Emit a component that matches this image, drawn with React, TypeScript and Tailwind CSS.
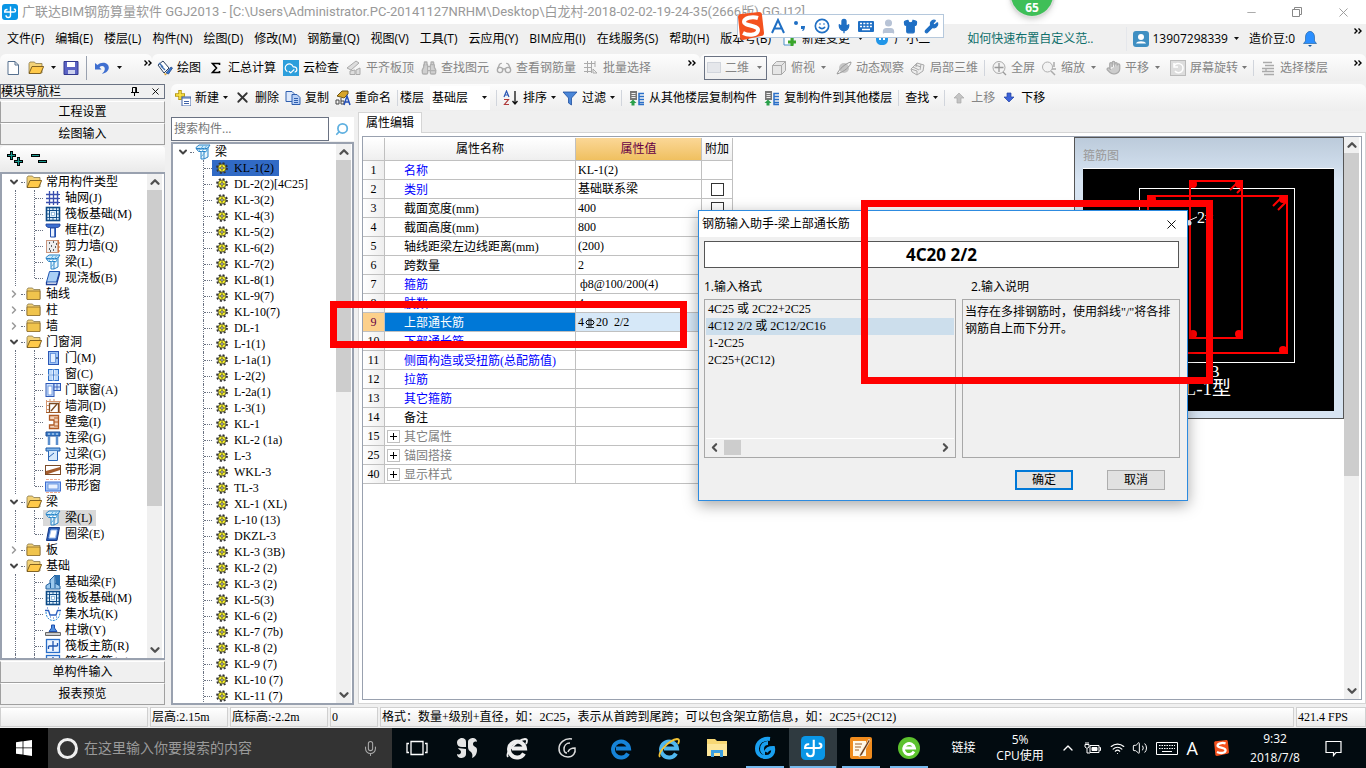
import type { ReactNode } from 'react'
import {
  Binoculars,
  ChevronDown,
  ChevronLeft,
  ChevronRight,
  ChevronUp,
  CloudCheck,
  Glasses,
  Hand,
  Mic,
  Minus,
  Search,
  Shirt,
  Smile,
  User,
  Volume2,
  Wifi,
  Wrench,
  X,
} from 'lucide-react'
import clsx from 'clsx'

const UI = "font-['Open_Sans','Noto_Sans_CJK_SC',sans-serif]"
const SONG = "font-['Liberation_Serif','Noto_Sans_CJK_SC',serif]"

/* ---------- small shared drawings ---------- */

function Svg({ children, size = 16, className }: { children: ReactNode; size?: number; className?: string }) {
  return (
    <svg viewBox="0 0 16 16" width={size} height={size} className={clsx('shrink-0', className)} fill="none">
      {children}
    </svg>
  )
}

function Caret({ light }: { light?: boolean }) {
  return (
    <svg viewBox="0 0 5 3" width="5" height="3" className="shrink-0">
      <path d="M0 0h5L2.500 3z" fill={light ? '#777' : '#111'} />
    </svg>
  )
}

function More() {
  return (
    <button aria-label="更多" className="shrink-0 self-start pt-1">
      <svg viewBox="0 0 8 6" width="8" height="6" fill="none" stroke="#000" strokeWidth="1.4">
        <path d="M.5.5 3 3 .5 5.5M4.5.5 7 3 4.5 5.5" />
      </svg>
    </button>
  )
}

function Divider() {
  return <span className="h-4 w-px shrink-0 bg-gray-300" />
}

function AppLogo({ size = 16 }: { size?: number }) {
  return (
    <Svg size={size}>
      <rect width="16" height="16" rx="3" fill="#0a96e6" />
      <path d="M8.500 2.500v8.700c0 1.500-.9 2.300-2.200 2.300S4 12.600 4 11.200" stroke="#fff" strokeWidth="1.400" />
      <path d="M5.500 5.500H4.800C3.500 5.500 2.700 6.600 2.700 8h9.300c1 0 1.600-.6 1.600-1.600S12.800 5 11.800 5" stroke="#fff" strokeWidth="1.400" />
    </Svg>
  )
}

/* ---------- component type icons ---------- */

function FolderIcon({ open }: { open?: boolean }) {
  return (
    <Svg>
      <path d="M1 3.500 2 2h4.500l1.200 1.500H14V13H1z" fill="#f3d277" stroke="#8a7a4c" strokeWidth=".8" />
      {open ? (
        <path d="M4 6.500h11.700L12.500 13.500H1z" fill="#ffc94a" stroke="#75571a" strokeWidth=".9" />
      ) : (
        <path d="M1 5h13v8.500H1z" fill="#f0c44d" stroke="#8a6a28" strokeWidth=".8" />
      )}
    </Svg>
  )
}

function GearIcon() {
  return (
    <svg viewBox="0 0 12 12" width="12" height="12" className="shrink-0" fill="none">
      <circle cx="6" cy="6" r="5" stroke="#333" strokeWidth="1.800" strokeDasharray="2 1.930" />
      <circle cx="6" cy="6" r="4" fill="#f6f022" stroke="#333" strokeWidth=".7" />
      <path d="M6 2.500v1.500M6 8v1.500M2.500 6H4M8 6h1.500" stroke="#555" strokeWidth=".8" />
      <circle cx="6" cy="6" r="1.300" fill="#fff" stroke="#222" strokeWidth=".8" />
    </svg>
  )
}

function BeamIcon() {
  return (
    <Svg>
      <path d="M1 3.500 4 1h11l-2.500 3.500H1z" fill="#cfeafa" stroke="#2b83c6" />
      <path d="M1.500 5h11l-1 2.500H3.500z" fill="#fff" stroke="#2b83c6" />
      <path d="M6 8v7h3V8M9 15l4-2V3" fill="#e4f3fc" stroke="#2b83c6" />
      <path d="M6 13l7-8M3.500 7.500 8 2M6.500 8l5-6" stroke="#5aaee2" />
    </Svg>
  )
}

function TypeIcon({ kind }: { kind: string }) {
  switch (kind) {
    case 'axis':
      return (
        <Svg>
          <path d="M4.500 1v14M8.500 1v14M12.500 1v14M1 4.500h13M1 8.500h13M1 12.500h13" stroke="#3a4fae" strokeWidth="1.300" />
          <path d="M14 4.500h2M14 8.500h2M14 12.500h2" stroke="#3a4fae" strokeDasharray="1 1" />
        </Svg>
      )
    case 'raft':
      return (
        <Svg>
          <rect x="1.500" y="1.500" width="13" height="13" fill="#dff0fb" stroke="#0d4a86" strokeWidth="1.600" />
          <rect x="4.500" y="4.500" width="7" height="7" stroke="#0d4a86" />
          <path d="M4.500 2v2.500M8 2v2.500M11.500 2v2.500M4.500 12v2M8 12v2M11.500 12v2M2 4.500h2M2 8h2M2 11.500h2M12 4.500h2M12 8h2M12 11.500h2" stroke="#0d4a86" strokeWidth=".8" />
          <rect x="6.500" y="6.500" width="3" height="3" fill="#fff" stroke="#7aa9d0" strokeWidth=".7" />
        </Svg>
      )
    case 'column':
      return (
        <Svg>
          <path d="M1 2h14v2l-2 1.500H3L1 4z" fill="#3b6fd0" stroke="#1c3f97" strokeWidth=".8" />
          <path d="M5.500 6h5v9h-5z" fill="#e8f1ff" stroke="#1f4fae" />
          <path d="M10 6v9" stroke="#1f4fae" strokeWidth="1.500" />
        </Svg>
      )
    case 'wall':
      return (
        <Svg>
          <rect x="1.500" y="2.500" width="12" height="12" fill="#eee" stroke="#c9957c" />
          <path d="M4 5h1M8 4h1M6 8h1M10 9h1M4 11h1M8 12h1M11 6h1M5 13h1" stroke="#333" strokeWidth="1.300" />
          <path d="M13 2v12M13 5h2M13 9h2M13 13h2" stroke="#c96a2f" />
        </Svg>
      )
    case 'beam':
      return <BeamIcon />
    case 'slab':
      return (
        <Svg>
          <path d="M4.500 1.500h10L11.500 12H1.500z" fill="#a9cff5" stroke="#1f55b0" />
          <path d="M1.500 12v2.500h10L14.500 4V1.500" stroke="#1f3f97" strokeWidth="1.300" />
        </Svg>
      )
    case 'door':
      return (
        <Svg>
          <rect x="3.500" y="1.500" width="10" height="13" fill="#9cc3f5" stroke="#2c57b5" />
          <rect x="5.500" y="3.500" width="5" height="9" fill="#e3efff" stroke="#5b8bdc" strokeWidth=".8" />
          <path d="M11 8h2" stroke="#123" />
        </Svg>
      )
    case 'window':
      return (
        <Svg>
          <rect x="3.500" y="3.500" width="10" height="11" fill="#bcd9fb" stroke="#2c6fc9" />
          <path d="M8.500 3.500v11M3.500 9h10" stroke="#fff" strokeWidth="2" />
          <path d="M8.500 3.500v11M3.500 9h10" stroke="#2c6fc9" strokeWidth=".8" />
        </Svg>
      )
    case 'doorwin':
      return (
        <Svg>
          <rect x="1" y="1.500" width="8" height="13" fill="#cfe2fb" stroke="#2c57b5" />
          <rect x="3" y="4" width="4" height="9" fill="#fff" stroke="#5b8bdc" strokeWidth=".8" />
          <rect x="9" y="1.500" width="6.500" height="7" fill="#cfe2fb" stroke="#2c57b5" />
          <path d="M12 2v6M9 5h6" stroke="#2c57b5" strokeWidth=".8" />
        </Svg>
      )
    case 'hole':
      return (
        <Svg>
          <path d="M1.500 2v13M1 3.500h15M1 7.500h3M1 11.500h3M5 1v3M9 1v3M14.500 3v12" stroke="#d59770" />
          <path d="M4.500 14V5.500h9V14" fill="#fff" stroke="#7c4a22" strokeWidth="1.300" />
          <path d="m6 13 6-7" stroke="#7c4a22" strokeWidth="1.300" />
          <path d="M1 14.500h15" stroke="#a15a28" />
        </Svg>
      )
    case 'niche':
      return (
        <Svg>
          <path d="M4.500 1.500h9v13h-9V11H9V6H4.500z" fill="#f3d4bd" stroke="#b05a24" strokeWidth="1.300" />
          <path d="M9 4h4M9 8h4M9 12h4" stroke="#b05a24" />
        </Svg>
      )
    case 'link':
      return (
        <Svg>
          <path d="M1 2h14v4H1z" fill="#3c7fcb" stroke="#1c4d94" />
          <path d="M3 4h2M7 4h2M11 4h2" stroke="#d9ecff" />
          <path d="M4 6v9M12 6v9" stroke="#5b8fce" strokeWidth="2.500" />
        </Svg>
      )
    case 'lintel':
      return (
        <Svg>
          <path d="M1 2h14v3H1z" fill="#7fb4ea" stroke="#1c5aa6" />
          <path d="M3.500 5v9.500h9V5M4 11l5-4" fill="#d6e9fb" stroke="#2a66b6" />
        </Svg>
      )
    case 'striphole':
      return (
        <Svg>
          <rect x=".5" y="3.500" width="15" height="9" fill="#fff" stroke="#7a4a27" />
          <path d="M1 12V9l14-4v3L3 12z" fill="#a45c2c" />
        </Svg>
      )
    case 'stripwin':
      return (
        <Svg>
          <path d="M1 1.500h14M1 14.500h14" stroke="#eea98d" strokeDasharray="3 1" />
          <rect x=".5" y="4" width="15" height="9" fill="#a7c8f7" stroke="#3a6bd0" />
          <rect x="3" y="6" width="10" height="5" fill="#e9f2ff" stroke="#5b8bdc" strokeWidth=".8" />
        </Svg>
      )
    case 'ring':
      return (
        <Svg>
          <path d="M4 1.500h10.500L12 14.500H1.500z" fill="#2c5fb8" stroke="#173a86" />
          <path d="M6 4h6l-1.500 8H4z" fill="#fff" stroke="#9fc0ef" />
        </Svg>
      )
    case 'fbeam':
      return (
        <Svg>
          <path d="M10 1h5v10l-4 3z" fill="#2a6fb0" />
          <path d="M1 15v-3.500L5 9V6l5-5v8l5 3v3z" fill="#9cc9ee" stroke="#1f5f9e" />
          <path d="M5.500 14V9M10 9v5" stroke="#1f5f9e" />
        </Svg>
      )
    case 'pit':
      return (
        <Svg>
          <path d="M0 4.500h3.500L5 9h6l1.500-4.500H16" stroke="#2a5fc0" strokeWidth="1.300" />
          <path d="M1 6c0 5 3 8.500 7 8.500S15 11 15 6" stroke="#2a8fd8" strokeDasharray="2 1" />
          <path d="M5 11h1M8 12h1M11 11h1M2 2h1M13 2h1" stroke="#2a5fc0" />
        </Svg>
      )
    case 'pier':
      return (
        <Svg>
          <path d="M6.500 3h3v3l2.500 3.500H4L6.500 6z" fill="#4f8fe0" stroke="#1f4fae" />
          <path d="M.5 10.500h15v3H.5z" fill="#ccc" stroke="#666" />
        </Svg>
      )
    default:
      return (
        <Svg>
          <rect x="1.500" y="1.500" width="13" height="13" fill="#eef6ff" stroke="#2a6fc9" strokeWidth="1.300" />
          <path d="M8 3v10M3.500 8h9M3.500 8v3M12.500 8V5" stroke="#1f55b0" strokeWidth="1.300" />
        </Svg>
      )
  }
}

/* ---------- title and menu ---------- */

function TitleBar() {
  return (
    <header className="flex h-6 shrink-0 items-center bg-white pl-[2px] text-[#999]">
      <AppLogo />
      <h1 className="ml-1 flex-1 whitespace-nowrap font-['Roboto','Noto_Sans_CJK_SC',sans-serif] text-[13px] leading-6">
        广联达BIM钢筋算量软件{' GGJ2013 - [C:\\Users\\Administrator.PC-20141127NRHM\\Desktop\\'}
        白龙村-2018-02-02-19-24-35(2666版).GGJ12]
      </h1>
      <button aria-label="最小化" className="flex w-[46px] justify-center">
        <Minus size={13} strokeWidth={1.5} />
      </button>
      <button aria-label="还原" className="flex w-[46px] justify-center">
        <svg viewBox="0 0 10 10" width="10" height="10" fill="none" stroke="#888">
          <path d="M.5 2.500h7v7h-7zM2.500 2.500v-2h7v7h-2" />
        </svg>
      </button>
      <button aria-label="关闭" className="flex w-[46px] justify-center">
        <X size={15} strokeWidth={1.5} />
      </button>
    </header>
  )
}

const menus = [
  '文件(F)', '编辑(E)', '楼层(L)', '构件(N)', '绘图(D)', '修改(M)', '钢筋量(Q)', '视图(V)',
  '工具(T)', '云应用(Y)', 'BIM应用(I)', '在线服务(S)', '帮助(H)', '版本号(B)',
]

function MenuBar() {
  return (
    <nav className="flex h-[29px] shrink-0 items-center justify-between whitespace-nowrap bg-[#f0f0f0] pr-1 text-xs">
      <div className="flex items-center gap-[11px] pl-[7px]">
        {menus.map((m) => (
          <button key={m}>{m}</button>
        ))}
        <button className="flex items-center gap-1">
          <Svg>
            <path d="M2 1h9v13H2z" fill="#fff" stroke="#4a90c8" />
            <path d="M10 7v8M6 11h8" stroke="#3aa52a" strokeWidth="3" />
          </Svg>
          新建变更
          <span className="ml-1"><Caret /></span>
        </button>
        <button className="flex items-center gap-1">
          <Svg>
            <path d="M2 2c3 2 9 2 12 0v6c0 4-2 6-6 6s-6-2-6-6z" fill="#2196e8" />
            <path d="M5 8h2M9 8h2" stroke="#fff" strokeWidth="2" />
          </Svg>
          广小二
        </button>
      </div>
      <div className="flex items-center self-stretch">
        <a href="#help" className="mr-8 text-[#0f6f6b]">如何快速布置自定义范..</a>
        <span className="mr-[6px] h-6 w-px bg-gray-200" />
        <svg viewBox="0 0 16 16" width="16" height="16">
          <rect width="16" height="16" rx="3" fill="#3f8fc2" />
          <circle cx="8" cy="6" r="3" fill="#fff" />
          <path d="M3 12.500c1-3 9-3 10 0z" fill="#fff" />
        </svg>
        <button className="ml-1 flex items-center gap-[6px]">
          13907298339 <Caret />
        </button>
        <span className="ml-[10px]">造价豆:0</span>
        <button aria-label="消息" className="mr-[37px] ml-2">
          <svg viewBox="0 0 14 16" width="14" height="16">
            <path d="M7 0c3 1 4.500 3 4.500 6v4l2 2.500H.5l2-2.500V6C2.500 3 4 1 7 0z" fill="#2b8fff" stroke="#14579b" strokeWidth=".6" />
            <path d="M5 14h4l-2 2z" fill="#14579b" />
          </svg>
        </button>
        <More />
      </div>
    </nav>
  )
}

/* ---------- toolbars ---------- */

function Tool({ icon, label, off, caret }: { icon?: ReactNode; label: string; off?: boolean; caret?: boolean }) {
  return (
    <button className={clsx('flex shrink-0 items-center gap-1', off ? 'text-[#858585]' : 'text-black')}>
      {icon}
      {label}
      {caret && <Caret light={off} />}
    </button>
  )
}

const strip = 'flex h-[27px] items-center rounded-md bg-linear-to-b from-[#fdfdfd] to-[#eeeeee]'

function MainToolbar() {
  return (
    <div className="flex h-[29px] shrink-0 items-center whitespace-nowrap text-xs">
      <div className={clsx(strip, 'w-[152px] shrink-0 gap-[7px] pl-[5px]')}>
        <button aria-label="新建">
          <Svg><path d="M3 1.500h7l3.500 3.500v9.500H3zM10 1.500V5h3.500" fill="#fff" stroke="#56708f" /></Svg>
        </button>
        <button aria-label="打开" className="flex items-center gap-[7px]">
          <FolderIcon open /> <Caret />
        </button>
        <button aria-label="保存">
          <Svg>
            <path d="M1 1.500h14v13H1z" fill="#5b63c4" stroke="#33398f" />
            <path d="M4 2h8v5H4z" fill="#fff" />
            <path d="M5 10h7v4H5z" fill="#cdd2ee" />
          </Svg>
        </button>
        <span className="h-6 w-px bg-gray-400" />
        <button aria-label="撤销" className="flex items-center gap-[7px]">
          <Svg>
            <path d="M1 3v6.500h6.500L5.500 7.300C7.500 5 11 6 10.800 9c-.2 2-1.300 3.500-3 5 4-1 7-3 7-6.500C14.800 2.500 7.500 1 3.500 5z" fill="#3f6fd0" />
          </Svg>
          <Caret />
        </button>
        <span className="ml-[15px] self-stretch"><More /></span>
      </div>
      <div className={clsx(strip, 'w-[548px] shrink-0 gap-[7px] pl-[5px]')}>
        <Tool label="绘图" icon={
          <Svg>
            <path d="m1 5 5-4 6 7-5 5z" fill="#fff" stroke="#2b3f5f" />
            <path d="m4 6 4 4M2 3l4 4" stroke="#3f6fb0" strokeWidth="1.500" />
            <path d="m9 13 5-6 1.500 1-4 6z" fill="#3476d0" stroke="#1c3f80" strokeWidth=".7" />
            <path d="m7 13 3 1-2 1.500z" fill="#e0a020" />
          </Svg>
        } />
        <Tool label="汇总计算" icon={
          <Svg><path d="M11.500 5V3.500h-7L8.500 8l-4 4.500h7V11" stroke="#000" strokeWidth="1.600" /></Svg>
        } />
        <Tool label="云检查" icon={
          <span className="flex size-4 items-center justify-center bg-[#2d9fdc] text-white"><CloudCheck size={14} /></span>
        } />
        <Tool off label="平齐板顶" icon={
          <Svg><path d="m1 8 9-7 3 2-8 7zM4 14.500V11l5-1v4.500zM10 10l4-2v6.500h-4z" fill="#ddd" stroke="#aaa" /></Svg>
        } />
        <Tool off label="查找图元" icon={<Binoculars size={16} color="#b0b0b0" fill="#d0d0d0" />} />
        <Tool off label="查看钢筋量" icon={<Glasses size={16} color="#aaa" />} />
        <Tool off label="批量选择" icon={
          <Svg><path d="M1 3.500h11M1 7.500h8M1 11.500h8M4.500 1v12M8.500 1v12M12 1v6M10 9l4 4M10 9v4h4" stroke="#aaa" /></Svg>
        } />
        <span className="ml-auto self-stretch pr-1"><More /></span>
      </div>
      <div className={clsx(strip, 'min-w-0 flex-1 gap-[6px] pl-1')}>
        <div className="-mr-[2px] flex h-6 w-[63px] shrink-0 items-center border border-gray-500 pl-[2px]">
          <span className="h-[11px] w-[14px] border border-gray-300 bg-gray-200" />
          <select aria-label="视图模式" className="ml-1 w-8 appearance-none text-[#858585]">
            <option>二维</option>
          </select>
          <Caret light />
        </div>
        <Tool off label="俯视" icon={
          <Svg><path d="M1.500 5.500h9v9h-9zM1.500 5.500l4-4h9v9l-4 4M10.500 5.500l4-4" fill="#e6e6e6" stroke="#aaa" /></Svg>
        } />
        <span className="mr-1"><Caret light /></span>
        <Tool off label="动态观察" icon={
          <Svg><circle cx="8" cy="8" r="5" fill="#c4c4c4" /><path d="M1 14C3 9 10 3 15 2c0 4-7 10-14 12z" stroke="#999" /></Svg>
        } />
        <Tool off label="局部三维" icon={
          <Svg><path d="m1 9 6-6 7 2-1 6-6 4-5-3zM5 5l6 2M3 7l6 3M7 3l-1 4M11 4l-1 6M1 9l6 2v4" fill="#eee" stroke="#aaa" /></Svg>
        } />
        <Divider />
        <Tool off label="全屏" icon={
          <Svg><circle cx="8" cy="7.500" r="6" fill="#f3f3f3" stroke="#aaa" /><path d="M8 3v9M3.500 7.500h9M12 12l3 3" stroke="#999" strokeWidth="1.300" /></Svg>
        } />
        <Tool off label="缩放" icon={
          <Svg><circle cx="6.500" cy="7" r="5" fill="#f3f3f3" stroke="#b0b0b0" /><path d="m10 11 4 4M13 2v5M11 9h4" stroke="#aaa" strokeWidth="1.500" /></Svg>
        } />
        <span className="mr-1"><Caret light /></span>
        <Tool off label="平移" icon={<Hand size={15} color="#aaa" fill="#ccc" />} />
        <span className="mr-1"><Caret light /></span>
        <Tool off caret label="屏幕旋转" icon={
          <Svg><rect x=".5" y=".5" width="15" height="15" fill="#ddd" stroke="#bbb" /><path d="M4 6c2-4 9-3 9 2s-6 6-8 3M4 3v4h4" stroke="#fff" strokeWidth="1.500" /></Svg>
        } />
        <Divider />
        <Tool off label="选择楼层" icon={
          <Svg><path d="M3 2.500h9M5 5.500h9M2 8.500h4M6 8.500h8M2 11.500h4M6 11.500h8M4 14.500h10M6 8v4" stroke="#aaa" strokeWidth="1.300" /></Svg>
        } />
        <span className="ml-auto self-stretch pr-1"><More /></span>
      </div>
    </div>
  )
}

function FloorCopyIcon() {
  return (
    <svg viewBox="0 0 17 16" width="17" height="16" fill="none" className="shrink-0">
      <path d="M2 1h7v9H2z" fill="#777" />
      <path d="M3.500 3.500h4M3.500 5.500h4M3.500 7.500h4" stroke="#eee" />
      <path d="M16 3.500h-5v11h5M11 6.500h5M11 9.500h5M11 12.500h5" stroke="#2a6fc8" strokeWidth="1.500" />
      <path d="M5 9.500 8.500 13H6.500v2.500h-3V13h-2z" fill="#2aa04a" />
    </svg>
  )
}

function ComponentToolbar() {
  return (
    <div className={clsx(strip, 'shrink-0 gap-[6px] whitespace-nowrap pl-1 text-xs')}>
      <Tool caret label="新建" icon={
        <Svg>
          <path d="M5 0v10M0 5h10" stroke="#b89a10" strokeWidth="3.500" />
          <path d="M5 1v8M1 5h8" stroke="#ffe94a" strokeWidth="1.500" />
          <path d="M7 7h9v9H7z" fill="#fff" stroke="#3f63a8" />
          <path d="M7 8h9M9 11.500h5M9 13.500h5" stroke="#3f63a8" />
        </Svg>
      } />
      <Tool label="删除" icon={<X size={17} strokeWidth={2.5} color="#333" />} />
      <Tool label="复制" icon={
        <Svg>
          <path d="M1 1.500h6l2 2v8H1z" fill="#dce8fb" stroke="#2f5fae" />
          <path d="M7 4.500h5l3 3v7H7z" fill="#b8d0f6" stroke="#2f5fae" />
          <path d="M9 8.500h4M9 10.500h4M9 12.500h4" stroke="#2f5fae" />
        </Svg>
      } />
      <Tool label="重命名" icon={
        <Svg>
          <path d="m2 6 5-5h6v3L9 8z" fill="#d8a52a" stroke="#6d5312" />
          <path d="M1 10h3v4H1zM6 8v6h3v-3H6" stroke="#444" />
          <path d="m9 15 3-9 3 9M10 12h4" stroke="#2550b8" strokeWidth="1.500" />
        </Svg>
      } />
      <Divider />
      <label htmlFor="floor" className="-ml-1">楼层</label>
      <div className="flex h-6 w-[60px] items-center bg-white pl-[2px]">
        <select id="floor" className="w-[50px] appearance-none">
          <option>基础层</option>
        </select>
        <Caret />
      </div>
      <Divider />
      <Tool caret label="排序" icon={
        <svg viewBox="0 0 16 16" width="16" height="16" fill="none" className="shrink-0">
          <path d="m1 7 2.500-6L6 7M2 5h3" stroke="#2b57b5" strokeWidth="1.200" />
          <path d="M1 9.500h4.500l-4 5H6" stroke="#b03a3a" strokeWidth="1.200" />
          <path d="M12 1v13M9.500 11l2.500 3 2.500-3" stroke="#111" strokeWidth="1.300" />
        </svg>
      } />
      <Tool caret label="过滤" icon={
        <Svg><path d="M1 2h14l-5.500 6v7l-3-2V8z" fill="#4a86d8" stroke="#1f4f9e" strokeWidth=".8" /></Svg>
      } />
      <Divider />
      <Tool label="从其他楼层复制构件" icon={<FloorCopyIcon />} />
      <Tool label="复制构件到其他楼层" icon={<FloorCopyIcon />} />
      <Divider />
      <Tool caret label="查找" />
      <Divider />
      <Tool off label="上移" icon={
        <Svg><path d="m8 3 5 5h-3v5H6V8H3z" fill="#c4c4c4" stroke="#aaa" strokeWidth=".7" /></Svg>
      } />
      <Tool label="下移" icon={
        <Svg><path d="m8 12 5-5h-3V3H6v4H3z" fill="#3c62d8" stroke="#2343a0" strokeWidth=".7" /></Svg>
      } />
    </div>
  )
}

/* ---------- scroll bar ---------- */

function ScrollBar({ thumb }: { thumb: string }) {
  return (
    <div className="flex w-[15px] shrink-0 flex-col items-center bg-[#f0f0f0] text-[#505050]">
      <ChevronUp size={14} strokeWidth={4} className="my-px shrink-0" />
      <div className="min-h-0 w-full flex-1">
        <div className={clsx('w-full bg-[#cdcdcd]', thumb)} />
      </div>
      <ChevronDown size={14} strokeWidth={4} className="my-px shrink-0" />
    </div>
  )
}

/* ---------- module navigator ---------- */

interface Group {
  name: string
  items?: [string, string][]
}

const groups: Group[] = [
  {
    name: '常用构件类型',
    items: [['轴网(J)', 'axis'], ['筏板基础(M)', 'raft'], ['框柱(Z)', 'column'], ['剪力墙(Q)', 'wall'], ['梁(L)', 'beam'], ['现浇板(B)', 'slab']],
  },
  { name: '轴线' },
  { name: '柱' },
  { name: '墙' },
  {
    name: '门窗洞',
    items: [
      ['门(M)', 'door'], ['窗(C)', 'window'], ['门联窗(A)', 'doorwin'], ['墙洞(D)', 'hole'], ['壁龛(I)', 'niche'],
      ['连梁(G)', 'link'], ['过梁(G)', 'lintel'], ['带形洞', 'striphole'], ['带形窗', 'stripwin'],
    ],
  },
  { name: '梁', items: [['梁(L)', 'beam'], ['圈梁(E)', 'ring']] },
  { name: '板' },
  {
    name: '基础',
    items: [['基础梁(F)', 'fbeam'], ['筏板基础(M)', 'raft'], ['集水坑(K)', 'pit'], ['柱墩(Y)', 'pier'], ['筏板主筋(R)', 'rebar'], ['筏板负筋(X)', 'rebar']],
  },
]

function Twisty({ open }: { open: boolean }) {
  return open ? (
    <ChevronDown size={12} strokeWidth={4} color="#444" className="shrink-0" />
  ) : (
    <ChevronRight size={12} strokeWidth={3} color="#999" className="shrink-0" />
  )
}

function NavGroup({ group }: { group: Group }) {
  const last = group.items ? group.items.length - 1 : 0
  return (
    <li>
      <button className="flex h-4 items-center pl-[5px]">
        <Twisty open={!!group.items} />
        <span className="w-[6px] px-px"><span className="block border-t border-dotted border-gray-500" /></span>
        <FolderIcon open={!!group.items} />
        <span className="ml-1">{group.name}</span>
      </button>
      {group.items && (
        <ul>
          {group.items.map(([label, kind], i) => (
            <li key={label} className="flex h-4 items-center pl-3">
              <span className="w-[19px] self-stretch border-l border-dotted border-gray-500" />
              <span className={clsx('border-l border-dotted border-gray-500', i === last ? 'h-2 self-start' : 'self-stretch')} />
              <span className="w-2 border-t border-dotted border-gray-500" />
              <button className={clsx('flex h-4 items-center gap-1 pr-1 pl-[2px]', group.name === '梁' && kind === 'beam' && 'bg-[#d9d9d9]')}>
                <TypeIcon kind={kind} />
                {label}
              </button>
            </li>
          ))}
        </ul>
      )}
    </li>
  )
}

const sectionButton = 'h-[22px] shrink-0 border border-[#a0a0a0] border-t-white bg-[#f0f0f0]'

function ModuleNav() {
  return (
    <aside className={clsx(SONG, 'flex w-[165px] shrink-0 flex-col pb-[2px] text-xs leading-4 whitespace-nowrap')}>
      <div className="flex h-[15px] shrink-0 items-center border border-gray-500">
        <h2 className="flex-1 text-xs">模块导航栏</h2>
        <button aria-label="固定" className="mr-[11px]">
          <svg viewBox="0 0 8 9" width="8" height="9" fill="none" stroke="#000">
            <path d="M1.500 5V.5h4V5M4.700.5V5M0 5.500h8M3.500 6v3" />
          </svg>
        </button>
        <button aria-label="关闭导航栏" className="mr-[3px]"><X size={11} strokeWidth={2} /></button>
      </div>
      <button className={clsx(sectionButton, 'mt-[2px]')}>工程设置</button>
      <button className={sectionButton}>绘图输入</button>
      <div className="mt-px flex h-[26px] shrink-0 items-center gap-2 rounded bg-linear-to-b from-white to-[#eaeaea] pl-[7px]">
        <button aria-label="全部展开">
          <Svg>
            <path d="M4.500 0v9M0 4.500h9M11.500 6v9M7 10.500h9" stroke="#000" strokeWidth="3" />
            <path d="M4.500 1v7M1 4.500h7M11.500 7v7M8 10.500h7" stroke="#1a9a90" strokeWidth="1.200" />
          </Svg>
        </button>
        <button aria-label="全部折叠">
          <Svg>
            <path d="M0 4.500h9M7 10.500h9" stroke="#000" strokeWidth="3" />
            <path d="M1 4.500h7M8 10.500h7" stroke="#1a9a90" strokeWidth="1.200" />
          </Svg>
        </button>
      </div>
      <div className="flex min-h-0 flex-1 overflow-hidden border-2 border-r border-gray-400 bg-white">
        <ul className="min-w-0 flex-1 overflow-hidden pl-px">
          {groups.map((g) => (
            <NavGroup key={g.name} group={g} />
          ))}
        </ul>
        <ScrollBar thumb="h-[70%]" />
        <span className="w-[2px]" />
      </div>
      <button className={clsx(sectionButton, 'mt-px')}>单构件输入</button>
      <button className={sectionButton}>报表预览</button>
    </aside>
  )
}

/* ---------- component list ---------- */

const components = [
  'KL-1(2)', 'DL-2(2)[4C25]', 'KL-3(2)', 'KL-4(3)', 'KL-5(2)', 'KL-6(2)', 'KL-7(2)', 'KL-8(1)', 'KL-9(7)', 'KL-10(7)',
  'DL-1', 'L-1(1)', 'L-1a(1)', 'L-2(2)', 'L-2a(1)', 'L-3(1)', 'KL-1', 'KL-2 (1a)', 'L-3', 'WKL-3', 'TL-3', 'XL-1 (XL)',
  'L-10 (13)', 'DKZL-3', 'KL-3 (3B)', 'KL-2 (2)', 'KL-3 (2)', 'KL-5(3)', 'KL-6 (2)', 'KL-7 (7b)', 'KL-8 (2)', 'KL-9 (7)',
  'KL-10 (7)', 'KL-11 (7)',
]

function ComponentList() {
  return (
    <section className="flex w-[183px] shrink-0 flex-col pt-[6px] pb-[2px]">
      <div className="flex h-6 shrink-0">
        <input
          aria-label="搜索构件"
          placeholder="搜索构件..."
          className="w-[158px] border border-gray-500 bg-white px-[2px] text-xs placeholder:text-[#777]"
        />
        <button aria-label="搜索" className="flex flex-1 items-center justify-center bg-white">
          <Search size={14} strokeWidth={3} color="#5fb0e0" className="-scale-x-100" />
        </button>
      </div>
      <div className={clsx(SONG, 'mt-px flex min-h-0 flex-1 border-2 border-gray-400 bg-white text-xs leading-4 whitespace-nowrap')}>
        <div className="min-w-0 flex-1 overflow-hidden">
          <button className="flex h-4 items-center pl-1">
            <Twisty open />
            <span className="w-[6px] px-px"><span className="block border-t border-dotted border-gray-500" /></span>
            <BeamIcon />
            <span className="ml-1">梁</span>
          </button>
          <ul>
            {components.map((c, i) => (
              <li key={c} className="flex h-4 items-center pl-[30px]">
                <span className="self-stretch border-l border-dotted border-gray-500" />
                <span className="w-2 border-t border-dotted border-gray-500" />
                <button className={clsx('flex h-4 items-center gap-[6px] pr-[5px] pl-1', i === 0 && 'bg-[#316ac5]')}>
                  <GearIcon />
                  {c}
                </button>
              </li>
            ))}
          </ul>
        </div>
        <ScrollBar thumb="h-[44%]" />
        <span className="w-[1px]" />
      </div>
    </section>
  )
}

/* ---------- property editor ---------- */

interface Property {
  no: number
  name: string
  value?: ReactNode
  tone: 'blue' | 'black' | 'gray'
  extra?: boolean
}

function RebarMark() {
  return (
    <svg viewBox="0 0 10 10" width="10" height="10" className="mx-px inline-block" fill="none" stroke="#000">
      <ellipse cx="5" cy="4.500" rx="4" ry="2.500" />
      <path d="M4 0v9M6 0v9M1 9.500h8" strokeWidth=".8" />
    </svg>
  )
}

const properties: Property[] = [
  { no: 1, name: '名称', value: 'KL-1(2)', tone: 'blue' },
  { no: 2, name: '类别', value: '基础联系梁', tone: 'blue', extra: true },
  { no: 3, name: '截面宽度(mm)', value: '400', tone: 'black', extra: true },
  { no: 4, name: '截面高度(mm)', value: '800', tone: 'black', extra: true },
  { no: 5, name: '轴线距梁左边线距离(mm)', value: '(200)', tone: 'black', extra: true },
  { no: 6, name: '跨数量', value: '2', tone: 'black', extra: true },
  { no: 7, name: '箍筋', value: <span className="pl-[2px]">ф8@100/200(4)</span>, tone: 'blue', extra: true },
  { no: 8, name: '肢数', value: '4', tone: 'blue' },
  { no: 9, name: '上部通长筋', value: <>4<RebarMark />20&nbsp; 2/2</>, tone: 'blue', extra: true },
  { no: 10, name: '下部通长筋', tone: 'blue', extra: true },
  { no: 11, name: '侧面构造或受扭筋(总配筋值)', tone: 'blue', extra: true },
  { no: 12, name: '拉筋', tone: 'blue', extra: true },
  { no: 13, name: '其它箍筋', tone: 'blue' },
  { no: 14, name: '备注', tone: 'black', extra: true },
  { no: 15, name: '其它属性', tone: 'gray' },
  { no: 25, name: '锚固搭接', tone: 'gray' },
  { no: 40, name: '显示样式', tone: 'gray' },
]

const tones = { blue: 'text-[#0000ff]', black: 'text-black', gray: 'text-[#808080]' }
const cell = 'border-r border-b border-[#c0c0c0] p-0'

function PropertyTable() {
  return (
    <table className="mt-px h-fit w-[370px] table-fixed border-separate border-spacing-0 whitespace-nowrap">
      <colgroup>
        <col className="w-[22px]" />
        <col className="w-[191px]" />
        <col className="w-[126px]" />
        <col className="w-[31px]" />
      </colgroup>
      <thead>
        <tr className="h-[23px] bg-linear-to-b from-white to-[#eee]">
          <th className={cell} aria-label="序号" />
          <th className={clsx(cell, 'font-normal')}>属性名称</th>
          <th className={clsx(cell, 'bg-linear-to-b from-[#fbd796] to-[#f0c05f] font-normal text-[#660044]')}>属性值</th>
          <th className={clsx(cell, 'font-normal')}>附加</th>
        </tr>
      </thead>
      <tbody>
        {properties.map((p) => {
          const active = p.no === 9
          return (
            <tr key={p.no} className="h-[19px]">
              <td className={clsx(cell, 'text-center', active ? 'bg-[#fcd08b] text-[#660044]' : 'bg-linear-to-r from-white to-[#eee]')}>{p.no}</td>
              <td className={clsx(cell, active ? 'bg-[#0078d7] text-white' : tones[p.tone])}>
                <div className="flex h-[18px] items-center pt-px">
                  <span className="w-[19px] pl-[2px]">
                    {p.tone === 'gray' && (
                      <button aria-label="展开" className="block border border-[#c0c0c0]">
                        <svg viewBox="0 0 11 11" width="11" height="11" stroke="#000"><path d="M5.500 2v7M2 5.500h7" /></svg>
                      </button>
                    )}
                  </span>
                  {p.name}
                </div>
              </td>
              <td className={clsx(cell, 'pl-[2px]', active && 'bg-[#d6e8f8]')}>{p.value}</td>
              <td className={clsx(cell, active && 'bg-[#d6e8f8]')}>
                {p.extra && (
                  <input type="checkbox" aria-label={p.name} className="mx-auto block size-[13px] appearance-none border border-[#333] bg-white" />
                )}
              </td>
            </tr>
          )
        })}
      </tbody>
    </table>
  )
}

function StirrupWindow() {
  return (
    <section className="flex w-[270px] shrink-0 flex-col border border-[#555] bg-linear-to-b from-[#bccbdb] to-[#d7e4f2] to-15% px-2 pb-[7px]">
      <h3 className="pt-[10px] pb-1 text-xs leading-4 text-[#999]">箍筋图</h3>
      <svg viewBox="0 0 251 242" width="251" height="243" className="border-t border-white bg-black" fill="none">
        <rect x="56.500" y="19.500" width="155" height="174" stroke="#fff" />
        <rect x="65" y="27" width="139" height="157" stroke="#f00" strokeWidth="2" />
        <rect x="107" y="12" width="52" height="157" stroke="#f00" strokeWidth="2" />
        <g fill="#f00">
          <circle cx="110" cy="15" r="4" />
          <circle cx="156" cy="15" r="4" />
          <circle cx="110" cy="165" r="4" />
          <circle cx="156" cy="165" r="4" />
          <circle cx="69" cy="30" r="4" />
          <circle cx="200" cy="30" r="4" />
          <circle cx="200" cy="181" r="4" />
        </g>
        <path d="m147 21 8-8M154 24l5-5M190 37l9-9M195 41l8-8" stroke="#f00" strokeWidth="2" />
        <path d="m96 56 18-8" stroke="#fff" />
        <circle cx="106" cy="54" r="2.500" fill="#fff" />
        <g fill="#fff" className="font-['Liberation_Serif','Noto_Sans_CJK_SC',serif]">
          <text x="114" y="54" fontSize="16">2#</text>
          <text x="126" y="208" fontSize="16">B</text>
          <text x="148" y="226" fontSize="19" textAnchor="end">KL-1型</text>
        </g>
      </svg>
    </section>
  )
}

function PropertyEditor() {
  return (
    <main className={clsx(SONG, 'flex min-w-0 flex-1 flex-col pt-px pb-[3px] text-xs leading-4')}>
      <div className="flex h-[21px] shrink-0">
        <button className="w-[64px] border border-b-0 border-[#d5d5d5] bg-white whitespace-nowrap">属性编辑</button>
        <div className="flex-1 border-b border-[#d5d5d5]" />
      </div>
      <div className="flex min-h-0 flex-1 border border-t-0 border-[#d5d5d5] bg-white p-[3px]">
        <div className="flex min-w-0 flex-1 overflow-hidden border border-gray-400 pr-[2px]">
          <PropertyTable />
          <div className="ml-auto"><StirrupWindow /></div>
          <ScrollBar thumb="h-[61%]" />
        </div>
      </div>
    </main>
  )
}

/* ---------- input assistant dialog ---------- */

const formats = ['4C25 或 2C22+2C25', '4C12 2/2 或 2C12/2C16', '1-2C25', '2C25+(2C12)']

function RebarDialog() {
  return (
    <div
      role="dialog"
      aria-label="钢筋输入助手"
      className="absolute top-[210px] left-[698px] flex h-[291px] w-[490px] flex-col border border-[#2d8be0] bg-[#f0f0f0] text-xs shadow-[0_4px_14px_rgba(0,0,0,0.35)]"
    >
      <div className="flex h-[26px] shrink-0 items-center justify-between bg-white pr-2 pl-[3px]">
        <h2>钢筋输入助手-梁上部通长筋</h2>
        <button aria-label="关闭"><X size={15} strokeWidth={1.5} /></button>
      </div>
      <div className="flex min-h-0 flex-1 flex-col px-[5px] pt-1">
        <input
          aria-label="配筋值"
          defaultValue="4C20 2/2"
          className="h-[27px] w-[475px] shrink-0 border border-[#555] bg-white text-center font-['Noto_Sans',sans-serif] text-[17px] font-bold"
        />
        <div className="mt-[11px] flex h-4 leading-4">
          <h3 className="w-[267px]">1.输入格式</h3>
          <h3>2.输入说明</h3>
        </div>
        <div className={clsx(SONG, 'mt-1 flex h-[159px] gap-[6px]')}>
          <div className="flex w-[252px] flex-col border border-[#a8a8a8] p-px">
            <ul className="flex-1 leading-[17px]">
              {formats.map((f, i) => (
                <li key={f}>
                  <button className={clsx('block h-[17px] w-full pl-[2px] text-left', i === 1 && 'bg-[#ccdeec]')}>{f}</button>
                </li>
              ))}
            </ul>
            <div className="flex h-[18px] items-center border-t border-white px-[2px] text-[#505050]">
              <ChevronLeft size={13} strokeWidth={4} />
              <span className="ml-[3px] h-[15px] w-[17px] bg-[#cdcdcd]" />
              <ChevronRight size={13} strokeWidth={4} className="ml-auto" />
            </div>
          </div>
          <p className="w-[218px] border border-[#a8a8a8] px-[2px] pt-1 leading-[17px]">
            当存在多排钢筋时，使用斜线"/"将各排钢筋自上而下分开。
          </p>
        </div>
        <div className="mt-3 mr-[17px] flex h-5 justify-end gap-[34px]">
          <button className="w-[58px] border-2 border-[#0078d7] bg-[#e1e1e1] leading-4">确定</button>
          <button className="w-[58px] border border-[#adadad] bg-[#e1e1e1] leading-4">取消</button>
        </div>
      </div>
    </div>
  )
}

/* ---------- floating input method bar ---------- */

function SogouMark({ size }: { size: number }) {
  return (
    <svg viewBox="0 0 28 28" width={size} height={size} className="shrink-0" fill="none">
      <path d="M2 5c0-2 1-3 3-3L23 0c2 0 3 1 3 3l2 18c0 2-1 3-3 3L7 28c-2 0-3-1-3-3z" fill="#f4511e" />
      <path d="M22 6C16 4 8 6 8 10s14 3 14 8-9 6-15 3" stroke="#fff" strokeWidth="4" />
    </svg>
  )
}

function InputMethodBar() {
  return (
    <div className="absolute top-3 left-[736px] flex items-center">
      <div className="relative z-10"><SogouMark size={28} /></div>
      <div className="-ml-[27px] flex h-6 w-[207px] items-center gap-[6px] border border-[#b5c8dc] bg-white pl-[32px] text-[#1f6fc4]">
        <svg viewBox="0 0 16 16" width="16" height="16" fill="none" stroke="#1f6fc4" strokeWidth="2"><path d="M2 15 8 2l6 13M4 10.500h8" /></svg>
        <svg viewBox="0 0 16 16" width="16" height="16" fill="#1f6fc4"><circle cx="4" cy="5" r="2" /><path d="M9 8h4c0 3-1 5-3 5l1-2H9z" /></svg>
        <Smile size={16} strokeWidth={2.5} />
        <Mic size={16} fill="#1f6fc4" />
        <Svg>
          <rect y="3" width="16" height="11" rx="1" fill="#1f6fc4" />
          <path d="M2 5.500h12M2 8.500h12" stroke="#fff" strokeWidth="1.500" strokeDasharray="2 1.300" />
          <path d="M4 11.500h8" stroke="#fff" strokeWidth="1.500" />
        </Svg>
        <User size={17} color="#b7c3d6" fill="#b7c3d6" />
        <Shirt size={15} fill="#1f6fc4" />
        <Wrench size={15} fill="#1f6fc4" />
      </div>
    </div>
  )
}

/* ---------- status bar and taskbar ---------- */

function StatusBar() {
  const box = 'border border-[#d0d0d0] bg-linear-to-b from-white to-[#ececec] pl-px'
  return (
    <footer className={clsx(SONG, 'flex h-[21px] shrink-0 gap-[2px] pb-px text-xs leading-[19px] whitespace-nowrap')}>
      <span className={clsx(box, 'w-[148px]')} />
      <span className={clsx(box, 'w-[78px]')}>层高:2.15m</span>
      <span className={clsx(box, 'w-[98px]')}>底标高:-2.2m</span>
      <span className={clsx(box, 'w-[48px]')}>0</span>
      <span className={clsx(box, 'min-w-0 flex-1 overflow-hidden')}>
        格式：数量+级别+直径，如：2C25，表示从首跨到尾跨；可以包含架立筋信息，如：2C25+(2C12)
      </span>
      <span className={clsx(box, 'w-[70px]')}>421.4 FPS</span>
    </footer>
  )
}

function EIcon({ color, ring }: { color: string; ring?: string }) {
  return (
    <svg viewBox="0 0 24 24" width="24" height="24" fill="none">
      <path d="M19 17.500A8 8 0 1 1 20 12.500H7" stroke={color} strokeWidth="4" />
      {ring && <path d="M3 21C0 17 12 4 20 3c3 0 2 3 1 5" stroke={ring} strokeWidth="1.800" />}
    </svg>
  )
}

function GIcon({ color, width }: { color: string; width: number }) {
  return (
    <svg viewBox="0 0 24 24" width="24" height="24" fill="none" stroke={color} strokeWidth={width}>
      <path d="M17 3C9 2 4 7 4 12.500S8 21 13 21s8-4 7-9c-3 0-6 1-7 4" />
      <path d="M15 7c-4 0-6 3-6 6 0 2 1 4 3 4" />
    </svg>
  )
}

const pinned: { name: string; icon: ReactNode }[] = [
  {
    name: '任务视图',
    icon: (
      <svg viewBox="0 0 22 16" width="22" height="16" fill="none" stroke="#fff" strokeWidth="1.300">
        <path d="M5 1.500h12v13H5zM3 3.500H1v9h2M19 3.500h2v9h-2" />
      </svg>
    ),
  },
  {
    name: '管家',
    icon: (
      <svg viewBox="0 0 24 24" width="24" height="24" fill="#e5e5e5">
        <path d="M11 6c0-3-2-4-4-4S2 3.500 2 6.500 4 11 7 11h4z" />
        <path d="M13 11V6c0-3 3-4 5-4s4 1.500 4 4c-2-1-4 0-4 2 0 3 4 2 4 6 0 4-2 7-5 8 1-3 0-5-1-6-2-1-3-3-3-5z" />
        <path d="M11 13v5c0 3-3 4-5 4s-4-1.500-4-4c2 1 4 0 4-2 0-2-2-2-3-4z" />
      </svg>
    ),
  },
  { name: '浏览器', icon: <EIcon color="#eee" ring="#eee" /> },
  { name: '广联达', icon: <GIcon color="#ddd" width={1.5} /> },
]

const running: { name: string; icon: ReactNode; open?: boolean; focus?: boolean }[] = [
  { name: 'Edge', icon: <EIcon color="#1683d8" /> },
  { name: 'Internet Explorer', icon: <EIcon color="#4fb6ee" ring="#f2c335" /> },
  {
    name: '文件资源管理器',
    icon: (
      <svg viewBox="0 0 24 24" width="24" height="24">
        <path d="M2 3h8l2 2h10v15H2z" fill="#f7d774" />
        <path d="M2 8h20v12H2z" fill="#fde69a" />
        <path d="M6 21v-7h12v7h-3v-4H9v4z" fill="#3c9fe0" />
      </svg>
    ),
  },
  { name: 'G', icon: <GIcon color="#19a0f0" width={4} />, open: true },
  { name: 'GGJ2013', icon: <AppLogo size={24} />, open: true, focus: true },
  {
    name: '记事',
    icon: (
      <svg viewBox="0 0 24 24" width="24" height="24" fill="none">
        <rect x="1" y="1" width="22" height="22" rx="2" fill="#f08c1e" />
        <path d="M4 5h13v15H4z" fill="#fff8e8" />
        <path d="M6 8h7M6 11h6M6 14h4" stroke="#a0602a" />
        <path d="M20 3 11 18l-1 3 3-2 8-14z" fill="#6d3b14" stroke="#fff" strokeWidth=".6" />
      </svg>
    ),
    open: true,
  },
  {
    name: '安全浏览器',
    icon: (
      <svg viewBox="0 0 24 24" width="24" height="24" fill="none">
        <circle cx="12" cy="12" r="11" fill="#5cc22d" />
        <path d="M17 15.500A5.500 5.500 0 1 1 17.500 12H8" stroke="#fff" strokeWidth="2.800" />
      </svg>
    ),
    open: true,
  },
]

function Taskbar() {
  return (
    <div className="flex h-10 shrink-0 items-stretch whitespace-nowrap bg-[#020b10] text-xs text-white">
      <button aria-label="开始" className="flex w-12 items-center justify-center bg-black">
        <svg viewBox="0 0 16 16" width="16" height="16" fill="#fff">
          <path d="M0 2.200 6.600 1.300v6.200H0zM7.400 1.200 16 0v7.500H7.400zM0 8.300h6.600v6.300L0 13.700zM7.400 8.300H16V16l-8.600-1.200z" />
        </svg>
      </button>
      <label className="flex w-[344px] items-center bg-[#333] px-[9px]">
        <span className="size-[21px] rounded-full border-[3px] border-[#eee]" />
        <input
          aria-label="搜索"
          placeholder="在这里输入你要搜索的内容"
          className="ml-[6px] min-w-0 flex-1 bg-transparent text-sm placeholder:text-[#9a9a9a]"
        />
        <Mic size={17} strokeWidth={1.5} color="#aaa" className="mr-1" />
      </label>
      {pinned.map((p) => (
        <button key={p.name} aria-label={p.name} className="flex w-[50px] items-center justify-center">
          {p.icon}
        </button>
      ))}
      <span className="w-[5px]" />
      {running.map((p) => (
        <button
          key={p.name}
          aria-label={p.name}
          className={clsx('flex w-12 items-stretch px-px', p.focus && 'bg-[#2f3a40]')}
        >
          <span className={clsx('flex flex-1 items-center justify-center self-stretch border-y-2 border-t-transparent', p.open ? 'border-b-[#76b9ed]' : 'border-b-transparent', !p.focus && 'mx-1')}>
            {p.icon}
          </span>
        </button>
      ))}
      <div className="ml-auto flex items-center">
        <span className="mr-5">链接</span>
        <p className="w-[49px] text-center leading-4">5%<br />CPU使用</p>
        <button aria-label="显示隐藏的图标" className="ml-[15px]"><ChevronUp size={16} /></button>
        <svg viewBox="0 0 18 14" width="18" height="14" fill="none" stroke="#fff" className="ml-2">
          <path d="M6 4.500h9v7H6zM15.500 6.500h1v3h-1M1 3.500h4V6l-2 1.500L1 6zM2 1v2M4 1v2M3 8v4h3" />
          <path d="M8 6.500h5v3H8z" fill="#fff" />
        </svg>
        <Wifi size={15} strokeWidth={1.8} className="ml-[8px]" />
        <Volume2 size={16} strokeWidth={1.5} className="ml-[7px]" />
        <svg viewBox="0 0 22 13" width="22" height="13" fill="none" stroke="#fff" className="ml-2">
          <path d="M.5.5h21v12H.5z" />
          <path d="M3 3.500h16M3 6.500h16" strokeDasharray="1.500 1" />
          <path d="M6 9.500h10" />
        </svg>
        <span className="ml-[9px] text-lg">A</span>
        <span className="ml-[15px]"><SogouMark size={16} /></span>
        <time className="ml-[14px] w-[64px] text-center leading-[19px]">9:32<br />2018/7/8</time>
        <button aria-label="通知" className="mr-[24px] ml-[18px]">
          <svg viewBox="0 0 17 17" width="17" height="17" fill="none" stroke="#fff" strokeWidth="1.200">
            <path d="M1 1.500h15v11h-5L8.500 15.500V12.500H1z" />
          </svg>
        </button>
      </div>
    </div>
  )
}

export default function App() {
  return (
    <div className={clsx(UI, 'relative flex h-screen flex-col overflow-hidden bg-[#f0f0f0] text-black')}>
      <TitleBar />
      <MenuBar />
      <MainToolbar />
      <div className="mt-[2px] flex min-h-0 flex-1 gap-[6px]">
        <ModuleNav />
        <div className="flex min-w-0 flex-1 flex-col">
          <ComponentToolbar />
          <div className="flex min-h-0 flex-1 gap-1">
            <ComponentList />
            <PropertyEditor />
          </div>
        </div>
      </div>
      <StatusBar />
      <Taskbar />

      {/* windows and marks floating above the workspace */}
      <RebarDialog />
      <InputMethodBar />
      <div className="absolute -top-[28px] left-[1009px] flex size-[46px] items-end justify-center rounded-full border-2 border-[#ddd] bg-[#3fbf58] text-xs leading-4 font-bold text-white shadow-md">
        65
      </div>
      <div className="pointer-events-none absolute top-[301px] left-[330px] h-[47px] w-[357px] border-7 border-[#ff0000]" />
      <div className="pointer-events-none absolute top-[200px] left-[861px] h-[184px] w-[352px] border-7 border-[#ff0000]" />
    </div>
  )
}
